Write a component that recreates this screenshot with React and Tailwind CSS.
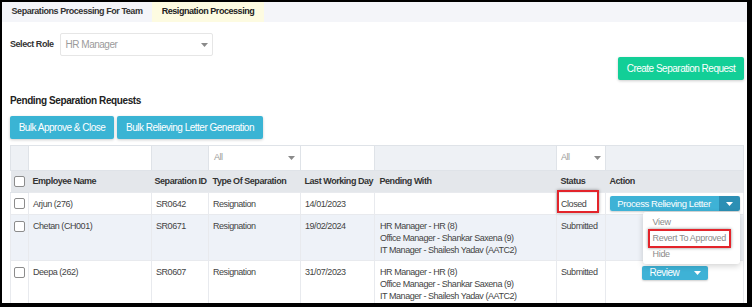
import React from "react";

function Caret({ className = "" }) {
  return (
    <svg width="7" height="4" viewBox="0 0 7 4" className={className}>
      <path d="M0 0h7L3.5 4z" fill="currentColor" />
    </svg>
  );
}

function Checkbox() {
  return <span className="inline-block h-[11px] w-[11px] rounded-[2px] border border-[#8c8c8c] bg-white align-middle" />;
}

const pendingLines = ["HR Manager - HR (8)", "Office Manager - Shankar Saxena (9)", "IT Manager - Shailesh Yadav (AATC2)"];

const rows = [
  { id: 1, name: "Arjun (276)", sep: "SR0642", type: "Resignation", lwd: "14/01/2023", pending: [], status: "Closed" },
  { id: 2, name: "Chetan (CH001)", sep: "SR0671", type: "Resignation", lwd: "19/02/2024", pending: pendingLines, status: "Submitted" },
  { id: 3, name: "Deepa (262)", sep: "SR0607", type: "Resignation", lwd: "31/07/2023", pending: pendingLines, status: "Submitted" },
];

function ProcessButton() {
  return (
    <div className="relative inline-flex h-[15px] rounded-[2px] align-middle shadow-[0_1px_2px_rgba(0,0,0,0.2)]">
      <div className="flex w-[109px] items-center justify-center rounded-l-[2px] bg-[#3eb2d6] text-[9.5px] tracking-[-0.4px] text-white">
        Process Relieving Letter
      </div>
      <div className="flex w-[21px] items-center justify-center rounded-r-[2px] bg-[#2c8fb4] text-white">
        <Caret />
      </div>
      <div className="absolute right-0 top-[16px] z-10 w-[97px] rounded-[3px] bg-white py-[2px] text-left text-[9px] tracking-[-0.3px] text-[#8a8a8a] shadow-[0_2px_6px_rgba(0,0,0,0.18)]">
        <div className="flex h-[16px] items-center pl-[10px]">View</div>
        <div className="relative flex h-[16px] items-center pl-[10px]">
          Revert To Approved
          <div className="absolute -top-[1px] left-[5px] h-[19px] w-[83px] border-2 border-[#e3242b] shadow-[0_0_3px_rgba(0,0,0,0.45)]" />
        </div>
        <div className="flex h-[16px] items-center pl-[10px]">Hide</div>
      </div>
    </div>
  );
}

function ReviewButton() {
  return (
    <div className="inline-flex h-[14px] w-[66px] items-center justify-between rounded-[2px] bg-[#3eb2d6] pl-[8px] pr-[7px] text-[10px] tracking-[-0.5px] text-white shadow-[0_1px_2px_rgba(0,0,0,0.2)]">
      <span>Review</span>
      <Caret />
    </div>
  );
}

export default function App() {
  return (
    <div className="h-[307px] w-[752px] overflow-hidden bg-black pb-[4px] pl-[2px] pr-[5px] pt-[2px] font-['Liberation_Sans',Arial,sans-serif] text-[#333]">
      <div className="relative h-full overflow-hidden bg-white">
        <div className="flex h-[20px] bg-[#f4f5f9]">
          <div className="flex w-[150px] items-center justify-center text-[9px] font-bold tracking-[-0.45px] text-[#333]">
            Separations Processing For Team
          </div>
          <div className="flex w-[112px] items-center justify-center bg-[#fdfbe1] text-[9px] font-bold tracking-[-0.45px] text-[#222]">
            Resignation Processing
          </div>
        </div>

        <div className="pl-[8px] pr-[3px]">
          <div className="mt-[11px] flex items-center">
            <span className="text-[9px] font-bold tracking-[-0.45px]">Select Role</span>
            <div className="ml-[6px] flex h-[23px] w-[153px] items-center justify-between rounded-[2px] border border-[#e6e6e6] pl-[5px] pr-[4px] text-[10px] tracking-[-0.5px] text-[#9b9b9b]">
              <span>HR Manager</span>
              <Caret className="text-[#8a8a8a]" />
            </div>
          </div>

          <div className="mt-[1px] flex justify-end">
            <button
              type="button"
              className="h-[23px] w-[126px] rounded-[2px] bg-[#12cf97] text-[10px] tracking-[-0.5px] text-white shadow-[0_1px_3px_rgba(0,0,0,0.2)]"
            >
              Create Separation Request
            </button>
          </div>

          <h3 className="mt-[15px] text-[10px] font-bold leading-[12px] tracking-[-0.4px] text-[#222]">Pending Separation Requests</h3>

          <div className="mt-[9px] flex gap-[3px]">
            <button
              type="button"
              className="h-[23px] w-[104px] rounded-[2px] bg-[#3ab4d4] text-[10px] tracking-[-0.5px] text-white shadow-[0_1px_3px_rgba(0,0,0,0.2)]"
            >
              Bulk Approve &amp; Close
            </button>
            <button
              type="button"
              className="h-[23px] w-[146px] rounded-[2px] bg-[#3ab4d4] text-[10px] tracking-[-0.5px] text-white shadow-[0_1px_3px_rgba(0,0,0,0.2)]"
            >
              Bulk Relieving Letter Generation
            </button>
          </div>

          <table className="mt-[6px] w-[733px] table-fixed border-collapse whitespace-nowrap text-[9px] tracking-[-0.45px]">
            <colgroup>
              <col className="w-[18px]" />
              <col className="w-[123px]" />
              <col className="w-[57px]" />
              <col className="w-[92px]" />
              <col className="w-[74px]" />
              <col className="w-[182px]" />
              <col className="w-[49px]" />
              <col className="w-[138px]" />
            </colgroup>
            <thead>
              <tr className="h-[25px] bg-[#eef1f5]">
                <td className="border border-[#dfe3e8]" />
                <td className="border border-[#dfe3e8] bg-white" />
                <td className="border border-[#dfe3e8]" />
                <td className="border border-[#dfe3e8] bg-white px-[5px] text-[#9b9b9b]">
                  <div className="flex items-center justify-between">
                    <span>All</span>
                    <Caret className="text-[#8a8a8a]" />
                  </div>
                </td>
                <td className="border border-[#dfe3e8] bg-white" />
                <td className="border border-[#dfe3e8]" />
                <td className="border border-[#dfe3e8] bg-white px-[4px] text-[#9b9b9b]">
                  <div className="flex items-center justify-between">
                    <span>All</span>
                    <Caret className="text-[#8a8a8a]" />
                  </div>
                </td>
                <td className="border border-[#dfe3e8]" />
              </tr>
              <tr className="h-[22px] bg-[#e4e7eb] text-left font-bold text-[#333]">
                <th className="border-y border-[#dfe3e8] pl-[3px]">
                  <Checkbox />
                </th>
                <th className="pl-[4px] pr-0">Employee Name</th>
                <th className="pl-[3px] pr-0">Separation ID</th>
                <th className="pl-[4px] pr-0">Type Of Separation</th>
                <th className="pl-[4px] pr-0">Last Working Day</th>
                <th className="pl-[5px] pr-0">Pending With</th>
                <th className="pl-[4px] pr-0">Status</th>
                <th className="border-r border-[#dfe3e8] pl-[4px]">Action</th>
              </tr>
            </thead>
            <tbody className="text-[#444]">
              {rows.map((row) => {
                const first = row.id === 1;
                const cell = `border border-[#e8eaee] p-0 ${first ? "h-[22px] align-middle" : "h-[46px] pt-[5px] align-top"}`;
                return (
                  <tr key={row.id} className={row.id === 2 ? "bg-[#eef2f8]" : "bg-white"}>
                    <td className={`${cell} pl-[3px]`}>
                      <Checkbox />
                    </td>
                    <td className={`${cell} pl-[4px] leading-[12px]`}>{row.name}</td>
                    <td className={`${cell} pl-[4px] leading-[12px]`}>{row.sep}</td>
                    <td className={`${cell} pl-[4px] leading-[12px]`}>{row.type}</td>
                    <td className={`${cell} pl-[4px] leading-[12px]`}>{row.lwd}</td>
                    <td className={`${cell} pl-[5px] leading-[12px]`}>
                      {row.pending.map((line) => (
                        <div key={line}>{line}</div>
                      ))}
                    </td>
                    <td className={`${cell} relative pl-[4px] leading-[12px]`}>
                      {row.status}
                      {row.status === "Closed" ? (
                        <div className="absolute -top-[3px] left-0 h-[23px] w-[42px] border-2 border-[#e3242b] shadow-[0_0_3px_rgba(0,0,0,0.4)]" />
                      ) : null}
                    </td>
                    <td className={`${cell} text-center leading-[12px] ${first ? "" : "pt-[4px]"}`}>
                      {first ? <ProcessButton /> : row.id === 3 ? <ReviewButton /> : null}
                    </td>
                  </tr>
                );
              })}
            </tbody>
          </table>
        </div>
      </div>
    </div>
  );
}
